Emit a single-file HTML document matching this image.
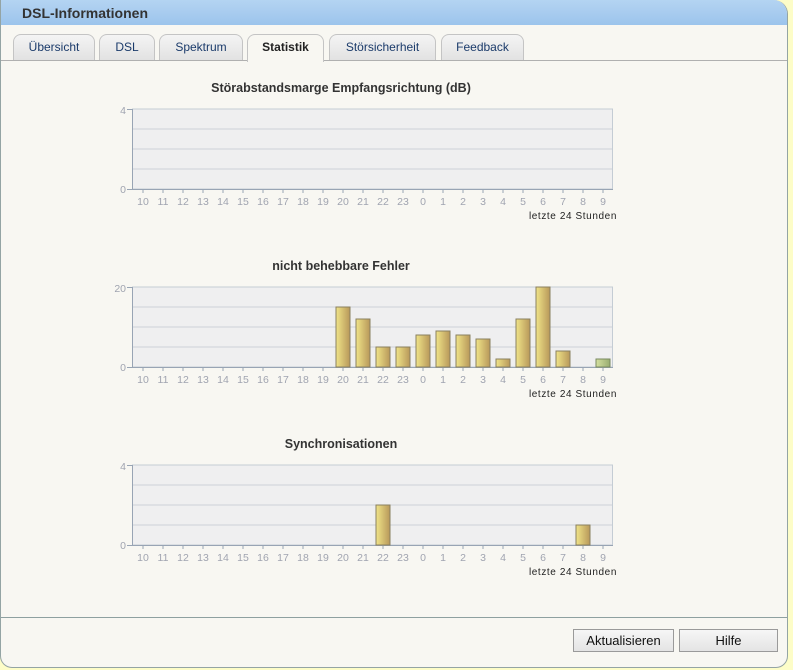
<!DOCTYPE html>
<html><head><meta charset="utf-8"><style>
body{margin:0;width:793px;height:670px;background:#fdfdc8;font-family:"Liberation Sans",sans-serif;overflow:hidden;position:relative}
#win{position:absolute;left:0;top:0;width:786px;height:667px;border:1px solid #94a4a4;border-top:none;border-radius:0 14px 12px 12px;background:#f8f7f2;overflow:hidden}
#title{height:25px;background:linear-gradient(#b4d4f2,#9cc4ec);font-weight:bold;font-size:14px;color:#333;line-height:26px;padding-left:21px}
.tab{position:absolute;top:34px;height:25px;border:1px solid #c4c4c4;border-bottom:none;border-radius:8px 8px 0 0;background:linear-gradient(#f4f4f4,#e2e2e2);font-size:12px;color:#1a3a6a;text-align:center;line-height:24px}
.tab.a{background:#f8f7f2;color:#222;font-weight:bold;height:27px;z-index:2}
#line{position:absolute;left:0;right:0;top:60px;border-top:1px solid #b0b0b0}
#fline{position:absolute;left:0;right:0;top:617px;border-top:1px solid #8ea0a0}
.btn{position:absolute;top:629px;height:21px;border:1px solid #9a9a9a;background:linear-gradient(#f6f6f6,#e4e4e4);font-size:13px;text-align:center;line-height:21px;color:#111}
svg{position:absolute;left:0;top:0}
</style></head><body>
<div id="win">
<div id="title">DSL-Informationen</div>
<div class="tab" style="left:12px;width:80px">Übersicht</div>
<div class="tab" style="left:98px;width:54px">DSL</div>
<div class="tab" style="left:158px;width:82px">Spektrum</div>
<div class="tab a" style="left:246px;width:75px">Statistik</div>
<div class="tab" style="left:328px;width:105px">Störsicherheit</div>
<div class="tab" style="left:440px;width:81px">Feedback</div>
<div id="line"></div>
<svg width="793" height="620" font-family="Liberation Sans, sans-serif">
<defs>
<linearGradient id="g" x1="0" x2="1"><stop offset="0" stop-color="#f0e488"/><stop offset="1" stop-color="#b8985a"/></linearGradient>
<linearGradient id="gg" x1="0" x2="1"><stop offset="0" stop-color="#d4e0a0"/><stop offset="1" stop-color="#98ac70"/></linearGradient>
<g id="lab" font-size="10.5" fill="#a0a4b0" text-anchor="middle">
<text x="142">10</text><text x="162">11</text><text x="182">12</text><text x="202">13</text><text x="222">14</text><text x="242">15</text><text x="262">16</text><text x="282">17</text><text x="302">18</text><text x="322">19</text><text x="342">20</text><text x="362">21</text><text x="382">22</text><text x="402">23</text><text x="422">0</text><text x="442">1</text><text x="462">2</text><text x="482">3</text><text x="502">4</text><text x="522">5</text><text x="542">6</text><text x="562">7</text><text x="582">8</text><text x="602">9</text>
<text x="616" y="14" text-anchor="end" fill="#222" font-size="10" letter-spacing="0.6">letzte 24 Stunden</text>
</g>
<g id="plot">
<rect x="131.5" y="0" width="480" height="80" fill="#efeff0" stroke="#c4ccd4"/>
<path d="M131 20H611M131 40H611M131 60H611" stroke="#cdd2d8"/>
<path d="M131.5 0V80.5H612M126 0.5H132M126 80.5H132" stroke="#98a4b4" fill="none"/>
<path d="M142 80v4M162 80v4M182 80v4M202 80v4M222 80v4M242 80v4M262 80v4M282 80v4M302 80v4M322 80v4M342 80v4M362 80v4M382 80v4M402 80v4M422 80v4M442 80v4M462 80v4M482 80v4M502 80v4M522 80v4M542 80v4M562 80v4M582 80v4M602 80v4" stroke="#98a4b4"/>
</g>
</defs>
<g font-weight="bold" font-size="12.5" fill="#333" text-anchor="middle">
<text x="340" y="92">Störabstandsmarge Empfangsrichtung (dB)</text>
<text x="340" y="270">nicht behebbare Fehler</text>
<text x="340" y="448">Synchronisationen</text>
</g>
<g transform="translate(0,109)"><use href="#plot"/><text x="125" y="5" font-size="10.5" fill="#a0a4b0" text-anchor="end">4</text><text x="125" y="84" font-size="10.5" fill="#a0a4b0" text-anchor="end">0</text><g transform="translate(0,96)"><use href="#lab"/></g></g>
<g transform="translate(0,287)"><use href="#plot"/><text x="125" y="5" font-size="10.5" fill="#a0a4b0" text-anchor="end">20</text><text x="125" y="84" font-size="10.5" fill="#a0a4b0" text-anchor="end">0</text><g transform="translate(0,96)"><use href="#lab"/></g>
<g fill="url(#g)" stroke="#8a8060">
<rect x="335" y="20" width="14" height="60"/><rect x="355" y="32" width="14" height="48"/><rect x="375" y="60" width="14" height="20"/><rect x="395" y="60" width="14" height="20"/><rect x="415" y="48" width="14" height="32"/><rect x="435" y="44" width="14" height="36"/><rect x="455" y="48" width="14" height="32"/><rect x="475" y="52" width="14" height="28"/><rect x="495" y="72" width="14" height="8"/><rect x="515" y="32" width="14" height="48"/><rect x="535" y="0" width="14" height="80"/><rect x="555" y="64" width="14" height="16"/></g>
<rect x="595" y="72" width="14" height="8" fill="url(#gg)" stroke="#7a8a60"/></g>
<g transform="translate(0,465)"><use href="#plot"/><text x="125" y="5" font-size="10.5" fill="#a0a4b0" text-anchor="end">4</text><text x="125" y="84" font-size="10.5" fill="#a0a4b0" text-anchor="end">0</text><g transform="translate(0,96)"><use href="#lab"/></g>
<g fill="url(#g)" stroke="#8a8060"><rect x="375" y="40" width="14" height="40"/><rect x="575" y="60" width="14" height="20"/></g></g>
</svg>
<div id="fline"></div>
<div class="btn" style="left:572px;width:99px">Aktualisieren</div>
<div class="btn" style="left:678px;width:97px">Hilfe</div>
</div>
</body></html>
